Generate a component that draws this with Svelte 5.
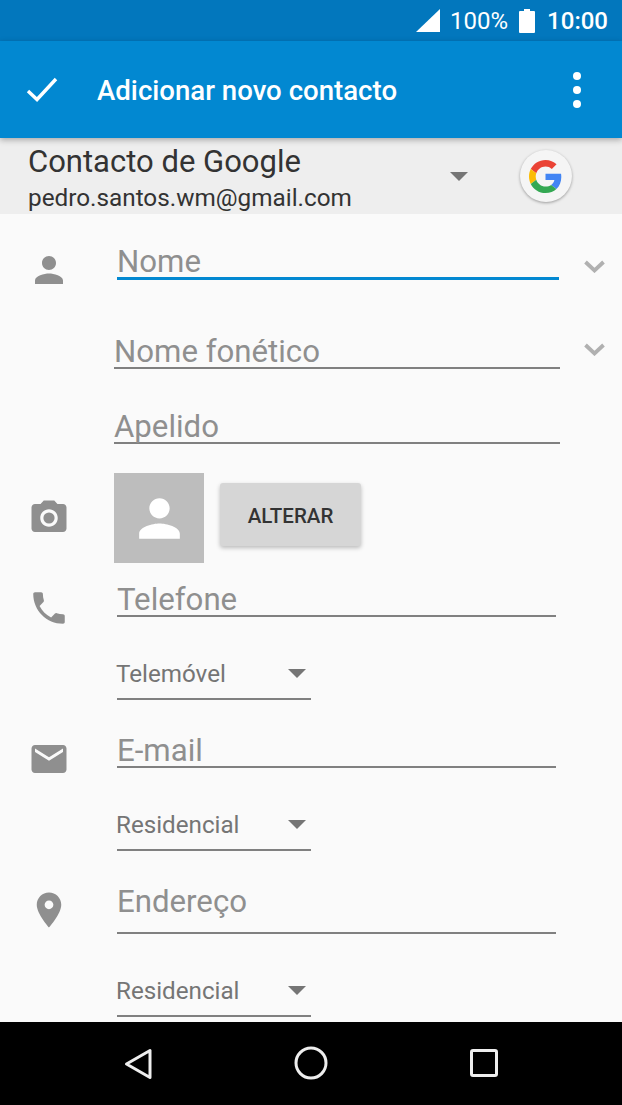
<script>
  const person = 'M12 12c2.21 0 4-1.79 4-4s-1.79-4-4-4-4 1.79-4 4 1.79 4 4 4zm0 2c-2.67 0-8 1.34-8 4v2h16v-2c0-2.66-5.33-4-8-4z';
  const phone = 'M6.62 10.79c1.44 2.83 3.76 5.14 6.59 6.59l2.2-2.2c.27-.27.67-.36 1.02-.24 1.12.37 2.33.57 3.57.57.55 0 1 .45 1 1V20c0 .55-.45 1-1 1-9.39 0-17-7.61-17-17 0-.55.45-1 1-1h3.5c.55 0 1 .45 1 1 0 1.25.2 2.45.57 3.57.11.35.03.74-.25 1.02l-2.2 2.2z';
  const mail = 'M20 4H4c-1.1 0-1.99.9-1.99 2L2 18c0 1.1.9 2 2 2h16c1.1 0 2-.9 2-2V6c0-1.1-.9-2-2-2zm0 4l-8 5-8-5V6l8 5 8-5v2z';
  const pin = 'M12 2C8.13 2 5 5.13 5 9c0 5.25 7 13 7 13s7-7.75 7-13c0-3.87-3.13-7-7-7zm0 9.5c-1.38 0-2.5-1.12-2.5-2.5s1.12-2.5 2.5-2.5 2.5 1.12 2.5 2.5-1.12 2.5-2.5 2.5z';
</script>

<div class="screen">
  <div class="status">
    <svg class="signal" viewBox="0 0 24 23"><path d="M24 0V23H0z" /></svg>
    <span class="pct">100%</span>
    <svg class="battery" viewBox="0 0 16 24"><path d="M5 0h6v2h4a1 1 0 0 1 1 1v20a1 1 0 0 1-1 1H1a1 1 0 0 1-1-1V3a1 1 0 0 1 1-1h4z" /></svg>
    <span class="clock">10:00</span>
  </div>

  <header class="appbar">
    <svg class="check" viewBox="0 0 32 25"><path d="M2 14l9 8.5L30 2" /></svg>
    <h1>Adicionar novo contacto</h1>
    <div class="dots"><i></i><i></i><i></i></div>
  </header>

  <section class="account">
    <div class="account-text">
      <div class="account-type">Contacto de Google</div>
      <div class="account-mail">pedro.santos.wm@gmail.com</div>
    </div>
    <span class="arrow account-arrow"></span>
    <div class="google">
      <svg viewBox="0 0 48 48">
        <path fill="#EA4335" d="M24 9.5c3.54 0 6.71 1.22 9.21 3.6l6.85-6.85C35.9 2.38 30.47 0 24 0 14.62 0 6.51 5.38 2.56 13.22l7.98 6.19C12.43 13.72 17.74 9.5 24 9.5z" />
        <path fill="#4285F4" d="M46.98 24.55c0-1.57-.15-3.09-.38-4.55H24v9.02h12.94c-.58 2.96-2.26 5.48-4.78 7.18l7.73 6c4.51-4.18 7.09-10.36 7.09-17.65z" />
        <path fill="#FBBC05" d="M10.53 28.59c-.48-1.45-.76-2.99-.76-4.59s.27-3.14.76-4.59l-7.98-6.19C.92 16.46 0 20.12 0 24c0 3.88.92 7.54 2.56 10.78l7.97-6.19z" />
        <path fill="#34A853" d="M24 48c6.48 0 11.93-2.13 15.89-5.81l-7.73-6c-2.15 1.45-4.92 2.3-8.16 2.3-6.26 0-11.57-4.22-13.47-9.91l-7.98 6.19C6.51 42.62 14.62 48 24 48z" />
      </svg>
    </div>
  </section>

  <main class="form">
    <div class="row row-name">
      <div class="slot"><svg class="icon icon-name" viewBox="0 0 24 24"><path d={person} /></svg></div>
      <div class="field field-name active">Nome</div>
      <svg class="chevron" viewBox="0 0 21 13"><path d="M1.5 2l9 8.5 9-8.5" /></svg>
    </div>

    <div class="row row-phonetic">
      <div class="slot narrow"></div>
      <div class="field field-long">Nome fonético</div>
      <svg class="chevron" viewBox="0 0 21 13"><path d="M1.5 2l9 8.5 9-8.5" /></svg>
    </div>

    <div class="row row-surname">
      <div class="slot narrow"></div>
      <div class="field field-long">Apelido</div>
    </div>

    <div class="row row-photo">
      <div class="slot narrow"><svg class="icon icon-camera" viewBox="0 0 24 24">
        <path fill-rule="evenodd" d="M9 2L7.17 4H4c-1.1 0-2 .9-2 2v12c0 1.1.9 2 2 2h16c1.1 0 2-.9 2-2V6c0-1.1-.9-2-2-2h-3.17L15 2H9zm3 15c-2.76 0-5-2.24-5-5s2.24-5 5-5 5 2.24 5 5-2.24 5-5 5z" />
        <circle cx="12" cy="12" r="3.2" />
      </svg></div>
      <div class="photo">
        <svg viewBox="0 0 24 24"><path d={person} /></svg>
      </div>
      <button class="change">ALTERAR</button>
    </div>

    <div class="row row-phone">
      <div class="slot"><svg class="icon icon-phone" viewBox="0 0 24 24"><path d={phone} /></svg></div>
      <div class="field">Telefone</div>
    </div>

    <div class="row row-type">
      <div class="slot"></div>
      <div class="select"><span class="select-label">Telemóvel</span><span class="arrow"></span></div>
    </div>

    <div class="row row-mail">
      <div class="slot"><svg class="icon icon-mail" viewBox="0 0 24 24"><path d={mail} /></svg></div>
      <div class="field">E-mail</div>
    </div>

    <div class="row row-type">
      <div class="slot"></div>
      <div class="select"><span class="select-label">Residencial</span><span class="arrow"></span></div>
    </div>

    <div class="row row-address">
      <div class="slot"><svg class="icon icon-pin" viewBox="0 0 24 24"><path d={pin} /></svg></div>
      <div class="field field-address">Endereço</div>
    </div>

    <div class="row row-type">
      <div class="slot"></div>
      <div class="select"><span class="select-label">Residencial</span><span class="arrow"></span></div>
    </div>
  </main>

  <nav class="navbar">
    <svg class="nav-back" viewBox="0 0 28 32"><path d="M26 2.5v27L2.5 16z" /></svg>
    <svg class="nav-home" viewBox="0 0 34 34"><circle cx="17" cy="17" r="15" /></svg>
    <svg class="nav-recent" viewBox="0 0 28 28"><rect x="1.5" y="1.5" width="25" height="25" rx="1.5" /></svg>
  </nav>
</div>

<style>
  :global(body) {
    margin: 0;
  }

  .screen {
    position: relative;
    width: 622px;
    height: 1105px;
    overflow: hidden;
    display: flex;
    flex-direction: column;
    font-family: Roboto, sans-serif;
    background: #fafafa;
  }

  .status {
    height: 41px;
    flex: none;
    display: flex;
    align-items: center;
    justify-content: flex-end;
    padding-right: 14px;
    box-sizing: border-box;
    background: #0277bd;
    color: #fff;
  }

  .signal {
    width: 24px;
    height: 23px;
    fill: #fff;
    margin-right: 10px;
  }

  .pct {
    font-size: 24px;
    width: 59px;
    margin-right: 10px;
    white-space: nowrap;
  }

  .battery {
    width: 16px;
    height: 24px;
    fill: #fff;
    margin-right: 12px;
  }

  .clock {
    font-size: 24px;
    font-weight: 500;
  }

  .appbar {
    position: relative;
    z-index: 2;
    height: 97px;
    flex: none;
    display: flex;
    align-items: center;
    background: #0288d1;
    box-shadow: 0 2px 6px rgba(0, 0, 0, 0.3);
    color: #fff;
  }

  .check {
    width: 32px;
    height: 25px;
    margin-left: 26px;
    margin-right: 39px;
    fill: none;
    stroke: #fff;
    stroke-width: 3.4;
  }

  h1 {
    margin: 0;
    flex: 1;
    font-size: 27.6px;
    font-weight: 500;
    padding-top: 2px;
  }

  .dots {
    display: flex;
    flex-direction: column;
    gap: 6px;
    margin-right: 41px;
  }

  .dots i {
    width: 8px;
    height: 8px;
    border-radius: 50%;
    background: #fff;
  }

  .account {
    height: 76px;
    flex: none;
    display: flex;
    align-items: center;
    padding-left: 28px;
    box-sizing: border-box;
    background: #eee;
    position: relative;
  }

  .account-text {
    width: 422px;
    align-self: flex-start;
    margin-top: 1px;
    color: #333;
    white-space: nowrap;
  }

  .account-type {
    font-size: 31px;
    line-height: 46px;
  }

  .account-mail {
    font-size: 24.3px;
    line-height: 26px;
  }

  .arrow {
    display: block;
    width: 0;
    height: 0;
    border-left: 9px solid transparent;
    border-right: 9px solid transparent;
    border-top: 9px solid #757575;
  }

  .google {
    width: 52px;
    height: 52px;
    margin-left: 52px;
    border-radius: 50%;
    background: #f5f5f5;
    box-shadow: 0 1px 3px rgba(0, 0, 0, 0.35);
    display: flex;
    align-items: center;
    justify-content: center;
  }

  .google svg {
    width: 33px;
    height: 33px;
    margin-left: -1px;
  }

  .form {
    flex: 1;
    min-height: 0;
    overflow: hidden;
  }

  .row {
    display: flex;
    align-items: flex-end;
  }

  .slot {
    width: 117px;
    flex: none;
    align-self: flex-start;
  }

  .slot.narrow {
    width: 114px;
  }

  .icon {
    display: block;
    width: 42px;
    height: 42px;
    margin-left: 27.5px;
    fill: #8f8f8f;
  }

  .icon-name { margin-top: 35px; }
  .icon-camera { margin-top: 24px; }
  .icon-phone { margin-top: 24px; }
  .icon-mail { margin-top: 38px; }
  .icon-pin { margin-top: 37.5px; }

  .field {
    box-sizing: border-box;
    width: 439px;
    border-bottom: 2px solid #808080;
    font-size: 31.2px;
    line-height: 31px;
    color: #8f8f8f;
  }

  .field-name {
    width: 442px;
  }

  .field-name.active {
    border-bottom: 3px solid #0288d1;
  }

  .field-long {
    width: 446px;
  }

  .field-address {
    padding-bottom: 15px;
  }

  .chevron {
    width: 21px;
    height: 13px;
    margin-left: 25px;
    fill: none;
    stroke: #b0b0b0;
    stroke-width: 3.8;
  }

  .field-long + .chevron {
    margin-left: 24px;
  }

  .row-name { height: 66px; }
  .row-phonetic { height: 89px; }
  .row-surname { height: 75px; }
  .row-photo { height: 90px; margin-top: 29px; align-items: center; }
  .row-phone { height: 54px; }
  .row-type { height: 83px; }
  .row-mail { height: 68px; }
  .row-address { height: 83px; }

  .row-name .chevron { margin-bottom: 7px; }
  .row-phonetic .chevron { margin-bottom: 13px; }

  .photo {
    width: 90px;
    height: 90px;
    background: #bdbdbd;
    display: flex;
    align-items: center;
    justify-content: center;
  }

  .photo svg {
    width: 61px;
    height: 61px;
    fill: #fff;
  }

  .change {
    width: 141px;
    height: 63px;
    margin-left: 16px;
    margin-top: -8px;
    border: none;
    border-radius: 3px;
    background: #d6d6d6;
    box-shadow: 0 2px 4px rgba(0, 0, 0, 0.25);
    font-family: Roboto, sans-serif;
    font-size: 20.5px;
    font-weight: 500;
    color: #333;
    padding: 3px 0 0;
  }

  .select {
    box-sizing: border-box;
    width: 194px;
    height: 48px;
    display: flex;
    align-items: center;
    justify-content: space-between;
    padding-right: 5px;
    padding-bottom: 3px;
    border-bottom: 2px solid #808080;
    font-size: 24.2px;
    color: #757575;
  }

  .select-label {
    margin-left: -1px;
  }

  .navbar {
    height: 83px;
    flex: none;
    background: #000;
    position: relative;
  }

  .navbar svg {
    position: absolute;
    fill: none;
    stroke: #eee;
    stroke-width: 3;
  }

  .nav-back {
    left: 124px;
    top: 26px;
    width: 28px;
    height: 32px;
    stroke-linejoin: round;
  }

  .nav-home {
    left: 294px;
    top: 24px;
    width: 34px;
    height: 34px;
  }

  .nav-recent {
    left: 470px;
    top: 27px;
    width: 28px;
    height: 28px;
  }
</style>
